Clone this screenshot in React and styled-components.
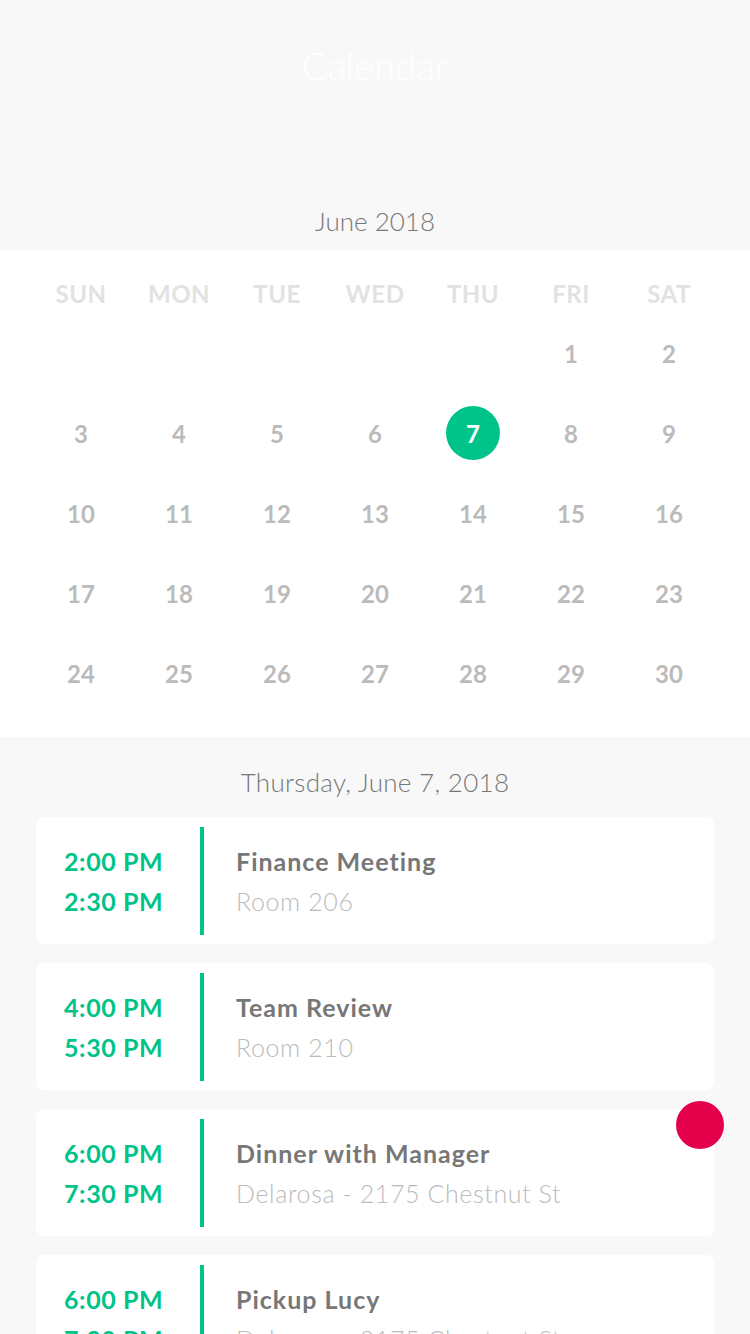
import React from "react";
import styled, { createGlobalStyle } from "styled-components";

const GlobalStyle = createGlobalStyle`
  html, body {
    margin: 0;
    padding: 0;
    background: #f8f8f8;
    overflow: hidden;
  }
  * {
    box-sizing: border-box;
  }
  body {
    font-family: Lato, "Open Sans", "Liberation Sans", sans-serif;
  }
`;

const WEEKDAYS = ["SUN", "MON", "TUE", "WED", "THU", "FRI", "SAT"];

// 6월 2018 : 금요일(5)부터 시작
const buildDays = () => {
  const cells = [];
  for (let i = 0; i < 5; i++) cells.push(null);
  for (let d = 1; d <= 30; d++) cells.push(d);
  return cells;
};

const EVENTS = [
  { start: "2:00 PM", end: "2:30 PM", title: "Finance Meeting", place: "Room 206" },
  { start: "4:00 PM", end: "5:30 PM", title: "Team Review", place: "Room 210" },
  {
    start: "6:00 PM",
    end: "7:30 PM",
    title: "Dinner with Manager",
    place: "Delarosa - 2175 Chestnut St",
    alert: true,
  },
  { start: "6:00 PM", end: "7:30 PM", title: "Pickup Lucy", place: "Delarosa - 2175 Chestnut St" },
];

const App = () => {
  const selected = 7;

  return (
    <>
      <GlobalStyle />
      <Page>
        <TopBar>Calendar</TopBar>
        <MonthLabel>June 2018</MonthLabel>
        <CalendarPanel>
          <Grid>
            {WEEKDAYS.map((w) => (
              <Weekday key={w}>{w}</Weekday>
            ))}
            {buildDays().map((d, idx) => (
              <DayCell key={idx}>
                {d && <DayNumber $active={d === selected}>{d}</DayNumber>}
              </DayCell>
            ))}
          </Grid>
        </CalendarPanel>
        <DateLabel>Thursday, June 7, 2018</DateLabel>
        <EventList>
          {EVENTS.map((ev, idx) => (
            <EventCard key={idx}>
              <TimeBox>
                <TimeText>{ev.start}</TimeText>
                <TimeText>{ev.end}</TimeText>
              </TimeBox>
              <Divider />
              <InfoBox>
                <EventTitle>{ev.title}</EventTitle>
                <EventPlace>{ev.place}</EventPlace>
              </InfoBox>
              {ev.alert && <AlertDot />}
            </EventCard>
          ))}
        </EventList>
      </Page>
    </>
  );
};

const Page = styled.div`
  width: 750px;
  height: 1334px;
  overflow: hidden;
  background: #f8f8f8;
`;

const TopBar = styled.div`
  height: 130px;
  display: flex;
  align-items: center;
  justify-content: center;
  color: #ffffff;
  font-size: 38px;
  font-weight: 300;
`;

const MonthLabel = styled.div`
  height: 120px;
  display: flex;
  align-items: flex-end;
  justify-content: center;
  padding-bottom: 9px;
  line-height: 40px;
  font-size: 26px;
  font-weight: 300;
  color: #777777;
`;

const CalendarPanel = styled.div`
  background: #ffffff;
  padding: 23px 32px 24px;
`;

const Grid = styled.div`
  display: grid;
  grid-template-columns: repeat(7, 98px);
  grid-auto-rows: 80px;
  grid-template-rows: 40px;
`;

const Weekday = styled.div`
  display: flex;
  align-items: center;
  justify-content: center;
  font-size: 24px;
  font-weight: 700;
  color: #e2e2e2;
  letter-spacing: 0.5px;
`;

const DayCell = styled.div`
  display: flex;
  align-items: center;
  justify-content: center;
`;

const DayNumber = styled.div`
  width: 54px;
  height: 54px;
  border-radius: 50%;
  display: flex;
  align-items: center;
  justify-content: center;
  font-size: 24px;
  font-weight: 700;
  color: ${(p) => (p.$active ? "#ffffff" : "#bbbbbb")};
  background: ${(p) => (p.$active ? "#00c389" : "transparent")};
`;

const DateLabel = styled.div`
  padding-top: 25px;
  height: 80px;
  line-height: 40px;
  text-align: center;
  font-size: 26px;
  font-weight: 300;
  color: #777777;
  letter-spacing: 0.3px;
`;

const EventList = styled.div`
  display: flex;
  flex-direction: column;
  gap: 19px;
  padding: 0 36px;
`;

const EventCard = styled.div`
  position: relative;
  height: 127px;
  flex-shrink: 0;
  background: #ffffff;
  border-radius: 8px;
  display: flex;
  align-items: stretch;
  padding: 10px 0 9px;
`;

const TimeBox = styled.div`
  width: 164px;
  padding-left: 28px;
  display: flex;
  flex-direction: column;
  justify-content: center;
`;

const TimeText = styled.div`
  line-height: 40px;
  font-size: 25px;
  font-weight: 700;
  letter-spacing: 0.6px;
  color: #00c389;
`;

const Divider = styled.div`
  width: 4px;
  background: #00c389;
`;

const InfoBox = styled.div`
  padding-left: 32px;
  display: flex;
  flex-direction: column;
  justify-content: center;
`;

const EventTitle = styled.div`
  line-height: 40px;
  font-size: 25px;
  font-weight: 700;
  letter-spacing: 1px;
  color: #777777;
`;

const EventPlace = styled.div`
  line-height: 40px;
  font-size: 25px;
  font-weight: 300;
  letter-spacing: 0.6px;
  color: #bbbbbb;
`;

const AlertDot = styled.div`
  position: absolute;
  top: -8px;
  right: -10px;
  width: 48px;
  height: 48px;
  border-radius: 50%;
  background: #e4004b;
`;

export default App;
